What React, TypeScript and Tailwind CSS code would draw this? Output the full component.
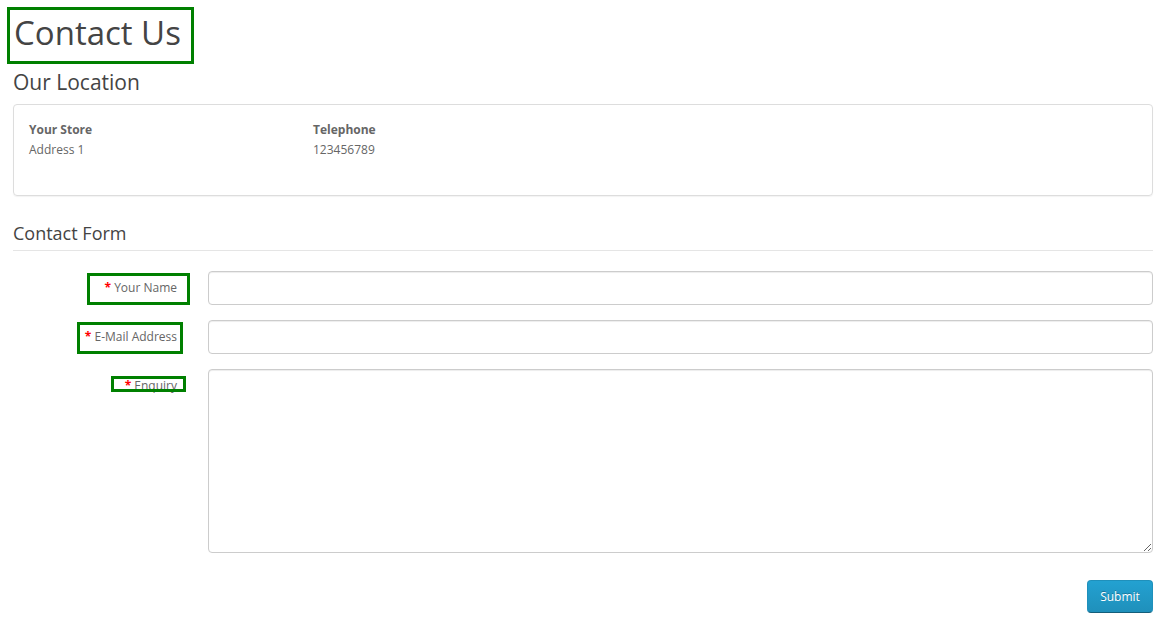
import React from "react";

const font = { fontFamily: '"Open Sans", "Liberation Sans", sans-serif' };

function Req() {
  return <span className="font-bold text-[#ff0000]">* </span>;
}

export default function App() {
  return (
    <div className="min-h-[621px] w-[1163px] bg-white text-[12px] leading-[20px] text-[#666]" style={font}>
      <div className="pl-[13px] w-[1153px]">
        <div className="pt-[7px] -ml-[6px]">
          <div className="w-[187px] h-[57px] border-[3px] border-[#008000] pl-[4px] pt-[5px]">
            <h1 className="text-[33px] leading-[36px] text-[#444] font-normal m-0">Contact Us</h1>
          </div>
        </div>

        <h3 className="mt-[7px] h-[23px] text-[21px] leading-[23px] text-[#444] font-normal">Our Location</h3>

        <div className="mt-[10px] border border-[#ddd] rounded-[4px] p-[15px] shadow-[0_1px_1px_rgba(0,0,0,0.05)]">
          <div className="grid grid-cols-[284px_284px_1fr]">
            <div>
              <div className="font-bold">Your Store</div>
              <div className="mb-[20px]">Address 1</div>
            </div>
            <div>
              <div className="font-bold">Telephone</div>
              <div>123456789</div>
            </div>
            <div />
          </div>
        </div>

        <div className="mt-[27px] h-[28px] border-b border-[#e5e5e5] text-[18px] leading-[20px] text-[#444]">
          Contact Form
        </div>

        <div className="mt-[20px] flex flex-col gap-[15px]">
          <div className="flex gap-[15px]">
            <div className="relative w-[180px] shrink-0 pt-[7px] pr-[16px] text-right">
              <Req />Your Name
              <div className="absolute left-[74px] top-[2px] w-[103px] h-[32px] border-[3px] border-[#008000]" />
            </div>
            <input className="flex-1 h-[34px] border border-[#ccc] rounded-[4px] px-[12px] shadow-[inset_0_1px_1px_rgba(0,0,0,0.075)] outline-none" />
          </div>
          <div className="flex gap-[15px]">
            <div className="relative w-[180px] shrink-0 pt-[7px] pr-[16px] text-right">
              <Req />E-Mail Address
              <div className="absolute left-[64px] top-[2px] w-[106px] h-[32px] border-[3px] border-[#008000]" />
            </div>
            <input className="flex-1 h-[34px] border border-[#ccc] rounded-[4px] px-[12px] shadow-[inset_0_1px_1px_rgba(0,0,0,0.075)] outline-none" />
          </div>
          <div className="flex gap-[15px]">
            <div className="relative w-[180px] shrink-0 pt-[7px] pr-[16px] text-right">
              <Req />Enquiry
              <div className="absolute left-[98px] top-[7px] w-[75px] h-[16px] border-[3px] border-[#008000]" />
            </div>
            <textarea className="flex-1 h-[184px] border border-[#ccc] rounded-[4px] px-[12px] py-[6px] shadow-[inset_0_1px_1px_rgba(0,0,0,0.075)] outline-none" />
          </div>
        </div>

        <div className="mt-[27px] flex justify-end">
          <button className="w-[66px] h-[33px] rounded-[4px] border border-[#1f90bb] border-b-[#145e7a] bg-gradient-to-b from-[#23a1d1] to-[#1f90bb] text-white text-[12px] [text-shadow:0_-1px_0_rgba(0,0,0,0.25)]">
            Submit
          </button>
        </div>
      </div>
    </div>
  );
}
